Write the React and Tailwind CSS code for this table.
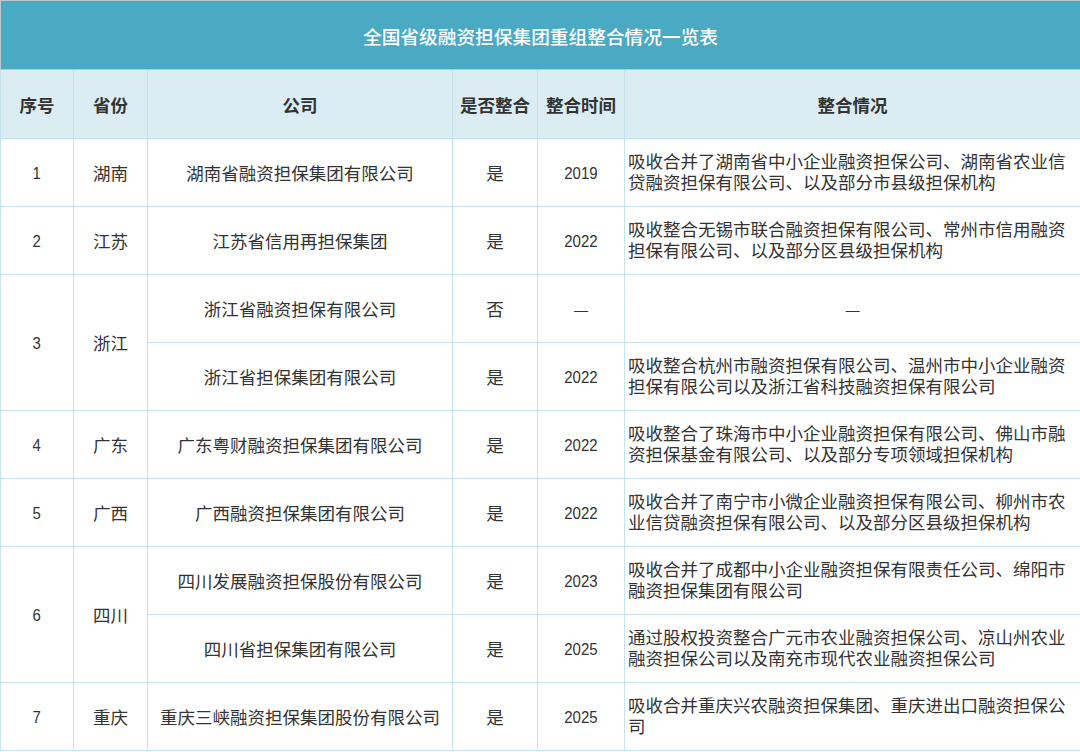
import React from "react";

const rows = [
  {
    no: "1",
    prov: "湖南",
    items: [
      {
        company: "湖南省融资担保集团有限公司",
        ok: "是",
        year: "2019",
        desc: ["吸收合并了湖南省中小企业融资担保公司、湖南省农业信", "贷融资担保有限公司、以及部分市县级担保机构"],
      },
    ],
  },
  {
    no: "2",
    prov: "江苏",
    items: [
      {
        company: "江苏省信用再担保集团",
        ok: "是",
        year: "2022",
        desc: ["吸收整合无锡市联合融资担保有限公司、常州市信用融资", "担保有限公司、以及部分区县级担保机构"],
      },
    ],
  },
  {
    no: "3",
    prov: "浙江",
    items: [
      { company: "浙江省融资担保有限公司", ok: "否", year: "—", desc: null },
      {
        company: "浙江省担保集团有限公司",
        ok: "是",
        year: "2022",
        desc: ["吸收整合杭州市融资担保有限公司、温州市中小企业融资", "担保有限公司以及浙江省科技融资担保有限公司"],
      },
    ],
  },
  {
    no: "4",
    prov: "广东",
    items: [
      {
        company: "广东粤财融资担保集团有限公司",
        ok: "是",
        year: "2022",
        desc: ["吸收整合了珠海市中小企业融资担保有限公司、佛山市融", "资担保基金有限公司、以及部分专项领域担保机构"],
      },
    ],
  },
  {
    no: "5",
    prov: "广西",
    items: [
      {
        company: "广西融资担保集团有限公司",
        ok: "是",
        year: "2022",
        desc: ["吸收合并了南宁市小微企业融资担保有限公司、柳州市农", "业信贷融资担保有限公司、以及部分区县级担保机构"],
      },
    ],
  },
  {
    no: "6",
    prov: "四川",
    items: [
      {
        company: "四川发展融资担保股份有限公司",
        ok: "是",
        year: "2023",
        desc: ["吸收合并了成都中小企业融资担保有限责任公司、绵阳市", "融资担保集团有限公司"],
      },
      {
        company: "四川省担保集团有限公司",
        ok: "是",
        year: "2025",
        desc: ["通过股权投资整合广元市农业融资担保公司、凉山州农业", "融资担保公司以及南充市现代农业融资担保公司"],
      },
    ],
  },
  {
    no: "7",
    prov: "重庆",
    items: [
      {
        company: "重庆三峡融资担保集团股份有限公司",
        ok: "是",
        year: "2025",
        desc: ["吸收合并重庆兴农融资担保集团、重庆进出口融资担保公", "司"],
      },
    ],
  },
];

const cell = "border border-[#c6e3ed] text-center align-middle";

function Num({ children }) {
  return (
    <span className="inline-block scale-x-[0.88] font-['Liberation_Sans',sans-serif] text-[17px]">
      {children}
    </span>
  );
}

export default function App() {
  return (
    <div className="w-[1080px] h-[752px] bg-white overflow-hidden font-['Noto_Sans_CJK_SC',sans-serif] text-[#333333]">
      <table className="w-[1080px] table-fixed border-collapse text-[17.5px] leading-[21px]">
        <colgroup>
          <col className="w-[73px]" />
          <col className="w-[74px]" />
          <col className="w-[305px]" />
          <col className="w-[85px]" />
          <col className="w-[87px]" />
          <col className="w-[456px]" />
        </colgroup>
        <thead>
          <tr className="h-[69px]">
            <th
              colSpan={6}
              className="border border-[#b9c9ce] bg-[#4aaac4] text-white font-medium text-[18.7px] text-center"
            >
              全国省级融资担保集团重组整合情况一览表
            </th>
          </tr>
          <tr className="h-[69px] bg-[#dbedf3]">
            <th className={cell + " font-bold"}>序号</th>
            <th className={cell + " font-bold"}>省份</th>
            <th className={cell + " font-bold"}>公司</th>
            <th className={cell + " font-bold"}>是否整合</th>
            <th className={cell + " font-bold"}>整合时间</th>
            <th className={cell + " font-bold"}>整合情况</th>
          </tr>
        </thead>
        <tbody>
          {rows.map((r) =>
            r.items.map((it, i) => (
              <tr key={r.no + "-" + i} className="h-[68px]">
                {i === 0 && (
                  <td rowSpan={r.items.length} className={cell}>
                    <Num>{r.no}</Num>
                  </td>
                )}
                {i === 0 && (
                  <td rowSpan={r.items.length} className={cell}>
                    {r.prov}
                  </td>
                )}
                <td className={cell}>{it.company}</td>
                <td className={cell}>{it.ok}</td>
                <td className={cell}>{it.year === "—" ? "—" : <Num>{it.year}</Num>}</td>
                <td className={cell + (it.desc ? " text-left pl-[3px] pr-0" : "")}>
                  {it.desc ? (
                    <div className="pb-[4px]">
                      {it.desc.map((l) => (
                        <div key={l}>{l}</div>
                      ))}
                    </div>
                  ) : (
                    "—"
                  )}
                </td>
              </tr>
            ))
          )}
        </tbody>
      </table>
    </div>
  );
}
